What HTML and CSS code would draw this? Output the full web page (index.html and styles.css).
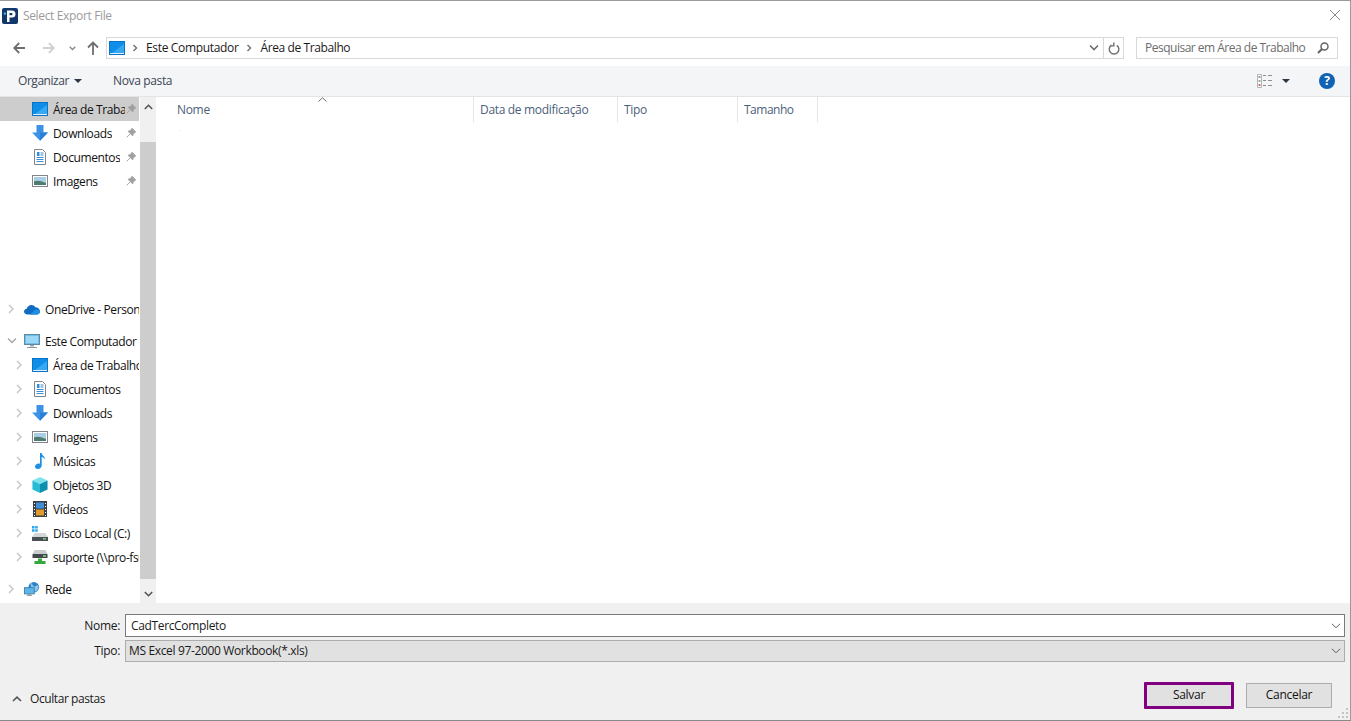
FILE: index.html
```html
<!DOCTYPE html>
<html lang="pt-BR">
<head>
<meta charset="utf-8">
<title>Select Export File</title>
<link rel="stylesheet" href="styles.css">
</head>
<body>
<svg class="defs" width="0" height="0" aria-hidden="true">
  <symbol id="i-desktop" viewBox="0 0 16 16"><rect x="0.500" y="1.500" width="15" height="13" fill="#0f8ee9" stroke="#0a74c8"/><path d="M3 13 L15 4 V13Z" fill="#37a8f2"/><rect x="1" y="13" width="14" height="1" fill="#dff0fc"/></symbol>
  <symbol id="i-down" viewBox="0 0 16 16"><path d="M4.500 0h7v7.500H16L8 15.800 0 7.500h4.500z" fill="#3c93e6"/><path d="M8 7.500h3.500H16L8 15.800z" fill="#2a7fd4"/></symbol>
  <symbol id="i-doc" viewBox="0 0 16 16"><path d="M2.500.5h8l3 3v12h-11z" fill="#fff" stroke="#80868c"/><path d="M5 3h2.500v4H5z" fill="#2f8fdc"/><path d="M8.500 4h3M8.500 6h3M4.500 8.500h7M4.500 10.500h7M4.500 12.500h7" stroke="#3f8ccc"/></symbol>
  <symbol id="i-pic" viewBox="0 0 16 16"><rect x="0.500" y="2.500" width="15" height="11" fill="#fff" stroke="#7f8589"/><rect x="2" y="4" width="12" height="8" fill="#a9cfe6"/><path d="M2 8.500c3-1.500 6-1 12 1.500v2H2z" fill="#4e7a70"/></symbol>
  <symbol id="i-pin" viewBox="0 0 10 10"><path d="M6 .3 9.700 4 8.700 4.600 7 6.400 6.800 8 2 3.200 3.600 3 5.400 1.200zM4 6 .6 9.400" fill="#a0a0a0" stroke="#a0a0a0" stroke-width=".9"/></symbol>
  <symbol id="i-cloud" viewBox="0 0 16 12"><path d="M3.500 11.500C1.500 11.500 0 10.300 0 8.600 0 7 1.200 6 2.700 5.800 3.300 3.800 5 2 7.400 2c1.800 0 3.100.9 3.800 2.200C13.800 4.100 16 6 16 8.300c0 1.900-1.400 3.200-3.300 3.200z" fill="#0f6cc4"/><path d="M6 11.500 11 6.500c2.500-.4 5 .2 5 2.100 0 1.800-1.400 2.900-3.300 2.900z" fill="#1f8ee0"/></symbol>
  <symbol id="i-pc" viewBox="0 0 16 16"><rect x="0.500" y="1.500" width="15" height="10" fill="#6fbde8" stroke="#5f8aa5"/><path d="M2 3h12v7H2z" fill="#9bd8f6"/><path d="M6 12h4v1.500H6z" fill="#9aa7ae"/><path d="M3 14h10v1H3z" fill="#8b98a0"/></symbol>
  <symbol id="i-music" viewBox="0 0 16 16"><path d="M8 0h1.500c.3 2.500 3.500 3 3.500 6.500-.8-1.500-2-2.200-3.300-2.400V12.500C9.700 14.500 7.800 16 5.700 16 4.100 16 3 15 3 13.600 3 11.900 4.700 10.500 6.600 10.500c.5 0 1 .1 1.400.3z" fill="#1d8fe6"/></symbol>
  <symbol id="i-cube" viewBox="0 0 18 18"><path d="M9 0 17.500 4 9 8 .5 4z" fill="#7fe3ee"/><path d="M.5 4 9 8v10L.5 14z" fill="#25bcd4"/><path d="M17.500 4 9 8v10l8.500-4z" fill="#0f8fb0"/></symbol>
  <symbol id="i-film" viewBox="0 0 16 16"><rect x="1" y="0" width="14" height="16" fill="#3a3f44"/><rect x="4" y="1.500" width="8" height="6" fill="#3f8fd8"/><rect x="4" y="8.500" width="8" height="6" fill="#e09a2e"/><path d="M2 2h1v1H2zM2 5h1v1H2zM2 8h1v1H2zM2 11h1v1H2zM2 14h1v1H2zM13 2h1v1h-1zM13 5h1v1h-1zM13 8h1v1h-1zM13 11h1v1h-1zM13 14h1v1h-1z" fill="#fff"/></symbol>
  <symbol id="i-disk" viewBox="0 0 16 16"><path d="M0 1h2.500v2.500H0zM3.200 1h2.500v2.500H3.200zM0 4.200h2.500v2.500H0zM3.200 4.200h2.500v2.500H3.200z" fill="#26a6f0"/><path d="M3 8h10l3 4H0z" fill="#d3d6d8"/><rect x="0" y="12" width="16" height="4" fill="#4a4f54"/><rect x="11" y="13" width="3" height="1.500" fill="#6fd06f"/></symbol>
  <symbol id="i-net" viewBox="0 0 16 16"><path d="M2.500 1h11l2 4h-15z" fill="#c9cdd0"/><rect x="0.500" y="5" width="15" height="4" fill="#43484d"/><rect x="11" y="6.300" width="3" height="1.400" fill="#8fe08f"/><path d="M6 9.500h4v2.500h3.500v3h-11v-3H6z" fill="#35a83c"/></symbol>
  <symbol id="i-globe" viewBox="0 0 18 16"><circle cx="11" cy="6" r="6" fill="#2f80c8"/><path d="M8 1c2 1 1 3 3 4s3-2 5-1c1 3-1 6-3 7-1-2-3-1-4-3S7 3 8 1z" fill="#8cc6ec"/><rect x="0.500" y="6.500" width="11" height="7" fill="#5cb6ea" stroke="#3f7fa5"/><path d="M4 14h4v1H4zM3 15h6v1H3z" fill="#8e9aa2"/></symbol>
  <symbol id="i-right" viewBox="0 0 8 10"><path d="M2 1 6 5 2 9" fill="none" stroke="#c4c4c4" stroke-width="1.400"/></symbol>
  <symbol id="i-crumb" viewBox="0 0 8 10"><path d="M2.500 2 5.500 5 2.500 8" fill="none" stroke="#777" stroke-width="1.500"/></symbol>
  <symbol id="i-open" viewBox="0 0 10 8"><path d="M1 1.500 5 5.500 9 1.500" fill="none" stroke="#a6a6a6" stroke-width="1.400"/></symbol>
  <symbol id="i-drop" viewBox="0 0 10 8"><path d="M1 1.500 5 5.500 9 1.500" fill="none" stroke="#6e6e6e" stroke-width="1.600"/></symbol>
  <symbol id="i-combo" viewBox="0 0 10 6"><path d="M1 .8 5 4.800 9 .8" fill="none" stroke="#5a5a5a" stroke-width="1"/></symbol>
</svg>

<div class="dialog">
  <header class="titlebar">
    <svg class="logo" width="16" height="16" viewBox="0 0 16 16" aria-hidden="true"><rect width="16" height="16" rx="2" fill="#12386b"/><path d="M5 2.500h5a3.500 3.500 0 0 1 0 7H7.500V14H5z" fill="#fff"/><rect x="7.500" y="5" width="2.800" height="2.200" fill="#12386b"/><rect x="1.800" y="4.500" width="2.200" height="2.200" fill="#3fb2e8"/></svg>
    <span class="title">Select Export File</span>
    <svg class="close" width="10" height="10" viewBox="0 0 10 10" aria-hidden="true"><path d="M0 0l10 10M10 0 0 10" stroke="#8a8a8a" fill="none"/></svg>
  </header>

  <nav class="navbar">
    <svg class="nav-icon" width="12" height="12" viewBox="0 0 12 12" aria-hidden="true"><path d="M12 6H1.500M6.200 1 1.200 6l5 5" fill="none" stroke="#6e6e6e" stroke-width="1.800"/></svg>
    <svg class="nav-icon fwd" width="12" height="12" viewBox="0 0 12 12" aria-hidden="true"><path d="M0 6h10.500M5.800 1l5 5-5 5" fill="none" stroke="#d0d0d0" stroke-width="1.800"/></svg>
    <svg class="nav-icon small" width="7" height="5" viewBox="0 0 7 5" aria-hidden="true"><path d="M.7.800 3.500 3.600 6.300.8" fill="none" stroke="#8a8a8a" stroke-width="1.400"/></svg>
    <svg class="nav-icon up" width="12" height="14" viewBox="0 0 12 14" aria-hidden="true"><path d="M6 14V2M1 6.500l5-5 5 5" fill="none" stroke="#6e6e6e" stroke-width="1.800"/></svg>
    <div class="address">
      <svg class="addr-icon" width="16" height="16" aria-hidden="true"><use href="#i-desktop"/></svg>
      <svg class="crumb-sep" width="8" height="10" aria-hidden="true"><use href="#i-crumb"/></svg>
      <span class="crumb">Este Computador</span>
      <svg class="crumb-sep" width="8" height="10" aria-hidden="true"><use href="#i-crumb"/></svg>
      <span class="crumb crumb-last">Área de Trabalho</span>
      <svg class="addr-drop" width="10" height="8" aria-hidden="true"><use href="#i-drop"/></svg>
      <span class="addr-refresh">
        <svg width="12" height="13" viewBox="0 0 12 13" aria-hidden="true"><path d="M3.500 3.200A4.800 4.800 0 1 0 8.800 3.300M5.800 .5v3.400H2.600" fill="none" stroke="#6e6e6e" stroke-width="1.400"/></svg>
      </span>
    </div>
    <div class="search">
      <span class="search-text">Pesquisar em Área de Trabalho</span>
      <svg width="12" height="12" viewBox="0 0 12 12" aria-hidden="true"><circle cx="7.500" cy="4.500" r="3.500" fill="none" stroke="#666" stroke-width="1.500"/><path d="M5 7 1 11" stroke="#666" stroke-width="2.200"/></svg>
    </div>
  </nav>

  <div class="toolbar">
    <span class="tool">Organizar</span>
    <span class="caret"></span>
    <span class="tool new-folder">Nova pasta</span>
    <svg class="view-icon" width="16" height="14" viewBox="0 0 16 14" aria-hidden="true"><path d="M.5.500h4v13h-4z" fill="#fff" stroke="#b5b5b5"/><path d="M1.500 2h2v2h-2z" fill="#7f9fc0"/><path d="M1.500 6h2v2h-2z" fill="#8fb08f"/><path d="M1.500 10h2v2h-2z" fill="#d07070"/><path d="M6 1.500h3M11 1.500h4M6 6.500h3M11 6.500h4M6 11.500h3M11 11.500h4" stroke="#8a8f96"/></svg>
    <span class="caret view-caret"></span>
    <span class="help">?</span>
  </div>

  <main class="main">
    <aside class="sidebar">
      <div class="tree">
        <div class="group">
          <div class="row qa selected"><svg class="ico" width="16" height="16"><use href="#i-desktop"/></svg><span class="lbl">Área de Trabalho</span><svg class="pin" width="10" height="10"><use href="#i-pin"/></svg></div>
          <div class="row qa"><svg class="ico" width="16" height="16"><use href="#i-down"/></svg><span class="lbl">Downloads</span><svg class="pin" width="10" height="10"><use href="#i-pin"/></svg></div>
          <div class="row qa"><svg class="ico" width="16" height="16"><use href="#i-doc"/></svg><span class="lbl">Documentos</span><svg class="pin" width="10" height="10"><use href="#i-pin"/></svg></div>
          <div class="row qa"><svg class="ico" width="16" height="16"><use href="#i-pic"/></svg><span class="lbl">Imagens</span><svg class="pin" width="10" height="10"><use href="#i-pin"/></svg></div>
        </div>
        <div class="group onedrive">
          <div class="row top"><svg class="arrow" width="8" height="10"><use href="#i-right"/></svg><svg class="ico" width="16" height="12"><use href="#i-cloud"/></svg><span class="lbl">OneDrive - Personal</span></div>
        </div>
        <div class="group spaced">
          <div class="row top"><svg class="arrow" width="10" height="8"><use href="#i-open"/></svg><svg class="ico" width="16" height="16"><use href="#i-pc"/></svg><span class="lbl">Este Computador</span></div>
          <div class="row sub"><svg class="arrow" width="8" height="10"><use href="#i-right"/></svg><svg class="ico" width="16" height="16"><use href="#i-desktop"/></svg><span class="lbl">Área de Trabalho</span></div>
          <div class="row sub"><svg class="arrow" width="8" height="10"><use href="#i-right"/></svg><svg class="ico" width="16" height="16"><use href="#i-doc"/></svg><span class="lbl">Documentos</span></div>
          <div class="row sub"><svg class="arrow" width="8" height="10"><use href="#i-right"/></svg><svg class="ico" width="16" height="16"><use href="#i-down"/></svg><span class="lbl">Downloads</span></div>
          <div class="row sub"><svg class="arrow" width="8" height="10"><use href="#i-right"/></svg><svg class="ico" width="16" height="16"><use href="#i-pic"/></svg><span class="lbl">Imagens</span></div>
          <div class="row sub"><svg class="arrow" width="8" height="10"><use href="#i-right"/></svg><svg class="ico" width="16" height="16"><use href="#i-music"/></svg><span class="lbl">Músicas</span></div>
          <div class="row sub"><svg class="arrow" width="8" height="10"><use href="#i-right"/></svg><svg class="ico" width="16" height="16"><use href="#i-cube"/></svg><span class="lbl">Objetos 3D</span></div>
          <div class="row sub"><svg class="arrow" width="8" height="10"><use href="#i-right"/></svg><svg class="ico" width="16" height="16"><use href="#i-film"/></svg><span class="lbl">Vídeos</span></div>
          <div class="row sub"><svg class="arrow" width="8" height="10"><use href="#i-right"/></svg><svg class="ico" width="16" height="16"><use href="#i-disk"/></svg><span class="lbl">Disco Local (C:)</span></div>
          <div class="row sub"><svg class="arrow" width="8" height="10"><use href="#i-right"/></svg><svg class="ico" width="16" height="16"><use href="#i-net"/></svg><span class="lbl">suporte (\\pro-fs01)</span></div>
        </div>
        <div class="group spaced">
          <div class="row top"><svg class="arrow" width="8" height="10"><use href="#i-right"/></svg><svg class="ico" width="18" height="16"><use href="#i-globe"/></svg><span class="lbl">Rede</span></div>
        </div>
      </div>
      <div class="scrollbar">
        <svg class="sb-btn sb-up" width="9" height="6" viewBox="0 0 9 6" aria-hidden="true"><path d="M.8 5 4.500 1.300 8.200 5" fill="none" stroke="#555" stroke-width="1.600"/></svg>
        <div class="sb-thumb"></div>
        <svg class="sb-btn sb-down" width="9" height="6" viewBox="0 0 9 6" aria-hidden="true"><path d="M.8 1 4.500 4.700 8.200 1" fill="none" stroke="#555" stroke-width="1.600"/></svg>
      </div>
    </aside>
    <section class="files">
      <div class="columns">
        <div class="col col-name">Nome</div>
        <div class="col col-date">Data de modificação</div>
        <div class="col col-type">Tipo</div>
        <div class="col col-size">Tamanho</div>
        <svg class="sort" width="9" height="5" viewBox="0 0 9 5" aria-hidden="true"><path d="M.5 4.500 4.500 .8 8.500 4.500" fill="none" stroke="#6a6a6a"/></svg>
      </div>
      <span class="speck"></span>
    </section>
  </main>

  <footer class="panel">
    <div class="field first">
      <span class="field-label">Nome:</span>
      <div class="input"><span>CadTercCompleto</span><svg width="10" height="6"><use href="#i-combo"/></svg></div>
    </div>
    <div class="field second">
      <span class="field-label">Tipo:</span>
      <div class="select"><span>MS Excel 97-2000 Workbook(*.xls)</span><svg width="10" height="6"><use href="#i-combo"/></svg></div>
    </div>
    <div class="actions">
      <svg class="hide-arrow" width="10" height="6" viewBox="0 0 10 6" aria-hidden="true"><path d="M1 5 5 1.200 9 5" fill="none" stroke="#555" stroke-width="1.600"/></svg>
      <span class="hide-label">Ocultar pastas</span>
      <button class="btn primary" type="button">Salvar</button>
      <button class="btn secondary" type="button">Cancelar</button>
    </div>
    <svg class="grip" width="11" height="11" viewBox="0 0 11 11" aria-hidden="true"><path d="M8 0h2v2H8zM4 4h2v2H4zM8 4h2v2H8zM0 8h2v2H0zM4 8h2v2H4zM8 8h2v2H8z" fill="#c4c4c4"/></svg>
  </footer>
</div>
</body>
</html>
```
FILE: styles.css
```css
* { box-sizing: border-box; }
html, body { margin: 0; padding: 0; }
body {
  width: 1351px;
  height: 721px;
  overflow: hidden;
  font-family: "Open Sans", "Noto Sans", sans-serif;
  font-size: 12px;
  color: #1a1a1a;
  background: #fff;
}
.defs { position: absolute; }
svg { display: block; flex: none; }

.dialog {
  width: 1351px;
  height: 721px;
  display: flex;
  flex-direction: column;
  border-top: 1px solid #9a9a9a;
  border-right: 1px solid #9a9a9a;
  border-bottom: 1px solid #8a8a8a;
  background: #fff;
}

.titlebar { height: 29px; display: flex; align-items: center; padding: 0 10px 0 2px; flex: none; }
.logo { margin-top: 1px; }
.title { margin-left: 5px; color: #9b9b9b; letter-spacing: -0.35px; }
.close { margin-left: auto; margin-top: -1px; }

.navbar { height: 36px; display: flex; align-items: center; padding: 0 12px 0 13px; flex: none; }
.nav-icon.fwd { margin-left: 18px; }
.nav-icon.small { margin-left: 14px; }
.nav-icon.up { margin-left: 11px; }
.address {
  margin-left: 7px;
  width: 1018px;
  height: 22px;
  border: 1px solid #d9d9d9;
  display: flex;
  align-items: center;
  padding-left: 2px;
}
.crumb-sep { margin: 0 7px 0 6px; }
.crumb { color: #1a1a1a; letter-spacing: -0.33px; margin-bottom: 2px; }
.crumb-last { letter-spacing: -0.4px; margin-left: 1px; }
.addr-drop { margin-left: auto; margin-right: 4px; }
.addr-refresh {
  width: 20px;
  height: 20px;
  border-left: 1px solid #d9d9d9;
  display: flex;
  align-items: center;
  justify-content: center;
}
.search {
  margin-left: 12px;
  width: 202px;
  height: 22px;
  border: 1px solid #d9d9d9;
  display: flex;
  align-items: center;
  justify-content: space-between;
  padding: 0 8px;
}
.search-text { color: #6d6d6d; letter-spacing: -0.5px; margin-bottom: 2px; }

.toolbar {
  height: 31px;
  flex: none;
  display: flex;
  align-items: center;
  padding: 0 15px 1px 18px;
  background: #f4f5f7;
  border-bottom: 1px solid #e4e4e4;
}
.tool { color: #3b4654; letter-spacing: -0.45px; }
.caret {
  width: 0;
  height: 0;
  margin-left: 5px;
  border-left: 4px solid transparent;
  border-right: 4px solid transparent;
  border-top: 4px solid #2b3646;
}
.new-folder { margin-left: 31px; letter-spacing: -0.35px; }
.view-icon { margin-left: auto; }
.view-caret { margin-left: 9px; }
.help {
  width: 16px;
  height: 16px;
  margin-left: 29px;
  border-radius: 50%;
  background: #0f62b4;
  color: #fff;
  font-weight: 700;
  font-size: 12px;
  line-height: 16px;
  text-align: center;
}

.main { flex: 1; min-height: 0; display: flex; }
.sidebar { width: 156px; flex: none; display: flex; overflow: hidden; }
.tree { width: 139px; margin-right: 1px; flex: none; overflow: hidden; }
.group.onedrive { margin-top: 104px; }
.group.spaced { margin-top: 8px; }
.row {
  position: relative;
  height: 24px;
  display: flex;
  align-items: center;
  white-space: nowrap;
  overflow: hidden;
  color: #111;
  letter-spacing: -0.4px;
}
.row.selected { background: #cdcdcd; }
.row.qa { padding-left: 32px; }
.row.top { padding-left: 7px; }
.row.sub { padding-left: 15px; }
.arrow { width: 10px; margin-right: 7px; }
.row .arrow[width="8"] { width: 8px; margin-right: 9px; }
.row.top .ico { width: 16px; margin-right: 5px; }
.row.qa .ico, .row.sub .ico { margin-right: 5px; }
.pin { position: absolute; left: 126px; top: 7px; }
.row.qa .lbl { overflow: hidden; max-width: 72px; }

.scrollbar {
  width: 16px;
  flex: none;
  background: #f0f0f0;
  display: flex;
  flex-direction: column;
  align-items: center;
}
.sb-up { margin-top: 7px; }
.sb-thumb { width: 16px; flex: 1; background: #cdcdcd; margin-top: 32px; }
.sb-down { margin: 12px 0 6px; }

.files { flex: 1; position: relative; min-width: 0; }
.columns { position: relative; display: flex; height: 25px; }
.col {
  display: flex;
  align-items: center;
  padding: 0 0 1px 6px;
  color: #4c607a;
  border-right: 1px solid #e5e5e5;
  letter-spacing: -0.32px;
}
.col-name { width: 318px; padding-left: 21px; }
.col-date { width: 144px; }
.col-type { width: 120px; }
.col-size { width: 80px; letter-spacing: -0.5px; }
.sort { position: absolute; left: 162px; top: 0; }
.speck { position: absolute; left: 24px; top: 33px; width: 1px; height: 1px; background: #ffe680; }

.panel {
  height: 117px;
  flex: none;
  position: relative;
  background: #f0f0f0;
  padding-top: 11px;
}
.field { display: flex; align-items: center; padding-right: 5px; }
.field + .field { margin-top: 3px; }
.field-label { width: 120px; text-align: right; margin-right: 5px; color: #1a1a1a; letter-spacing: -0.3px; }
.second .field-label, .select span { margin-bottom: 2px; }
.input, .select {
  flex: 1;
  display: flex;
  align-items: center;
  justify-content: space-between;
  letter-spacing: -0.35px;
}
.input { height: 23px; background: #fff; border: 1px solid #7a7a7a; padding: 0 3px 0 5px; }
.select { height: 22px; background: #e1e1e1; border: 1px solid #adadad; padding: 0 3px 0 3px; }
.actions { display: flex; align-items: center; margin-top: 20px; padding: 0 18px 0 12px; }
.hide-arrow { margin-top: 6px; }
.hide-label { margin: 6px 0 0 8px; letter-spacing: -0.42px; }
.btn {
  font: inherit;
  color: #111;
  background: #e1e1e1;
  padding: 0 0 2px;
  letter-spacing: -0.3px;
}
.primary { margin-left: auto; width: 90px; height: 27px; border: 3px solid #800080; border-radius: 1px; }
.secondary { margin-left: 12px; width: 86px; height: 25px; border: 1px solid #adadad; }
.grip { position: absolute; right: 1px; bottom: 1px; }
```
